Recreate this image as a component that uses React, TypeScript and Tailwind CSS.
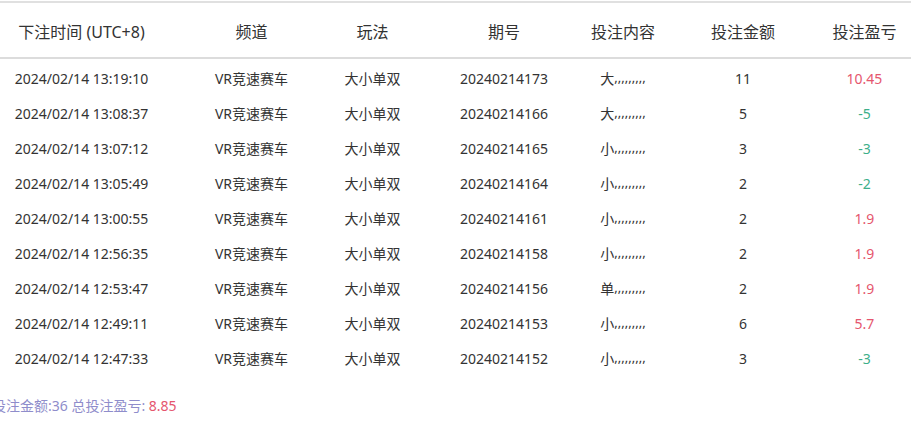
import React from "react";

const rows = [
  ["2024/02/14 13:19:10", "20240214173", "大", "11", "10.45"],
  ["2024/02/14 13:08:37", "20240214166", "大", "5", "-5"],
  ["2024/02/14 13:07:12", "20240214165", "小", "3", "-3"],
  ["2024/02/14 13:05:49", "20240214164", "小", "2", "-2"],
  ["2024/02/14 13:00:55", "20240214161", "小", "2", "1.9"],
  ["2024/02/14 12:56:35", "20240214158", "小", "2", "1.9"],
  ["2024/02/14 12:53:47", "20240214156", "单", "2", "1.9"],
  ["2024/02/14 12:49:11", "20240214153", "小", "6", "5.7"],
  ["2024/02/14 12:47:33", "20240214152", "小", "3", "-3"],
];

const grid = "grid grid-cols-[166px_146px_126px_125px_120px_120px_108px]";
const c1 = "flex items-center justify-center pr-[3px]";
const c2 = "flex items-center justify-center pl-[25px]";
const c3 = "flex items-center justify-center pr-[5px]";
const c4 = "flex items-center justify-center pl-[7px]";
const c5 = "flex items-center justify-center";
const c6 = "flex items-center justify-center";
const c7 = "flex items-center justify-center pl-[15px]";

export default function App() {
  return (
    <div
      className="w-[911px] h-[429px] bg-white overflow-hidden text-[#333]"
      style={{ fontFamily: '"Noto Sans", "Noto Sans CJK SC", sans-serif' }}
    >
      <div className="mt-px border-t-2 border-[#e0e0e0]">
        <div className={`${grid} h-[56px] pt-[4px] text-[16px] border-b-2 border-[#dcdcdc]`}>
          <div className={c1}>下注时间 (UTC+8)</div>
          <div className={c2}>频道</div>
          <div className={c3}>玩法</div>
          <div className={c4}>期号</div>
          <div className={c5}>投注内容</div>
          <div className={c6}>投注金额</div>
          <div className={c7}>投注盈亏</div>
        </div>
        {rows.map((r, i) => {
          const neg = r[4].startsWith("-");
          return (
            <div key={i} className={`${grid} h-[35px] pt-[3px] text-[14px]`}>
              <div className={c1}>{r[0]}</div>
              <div className={c2}>VR竞速赛车</div>
              <div className={c3}>大小单双</div>
              <div className={c4}>{r[1]}</div>
              <div className={c5}>
                {r[2]}
                <span className="text-[13px]">,,,,,,,,,</span>
              </div>
              <div className={c6}>{r[3]}</div>
              <div className={`${c7} ${neg ? "text-[#3daf8a]" : "text-[#e5566e]"}`}>{r[4]}</div>
            </div>
          );
        })}
      </div>
      <div className="mt-[22px] ml-[-8px] text-[14px] leading-[20px] text-[#8f8dcb] whitespace-nowrap">
        投注金额:36 总投注盈亏: <span className="text-[#e5566e]">8.85</span>
      </div>
    </div>
  );
}
